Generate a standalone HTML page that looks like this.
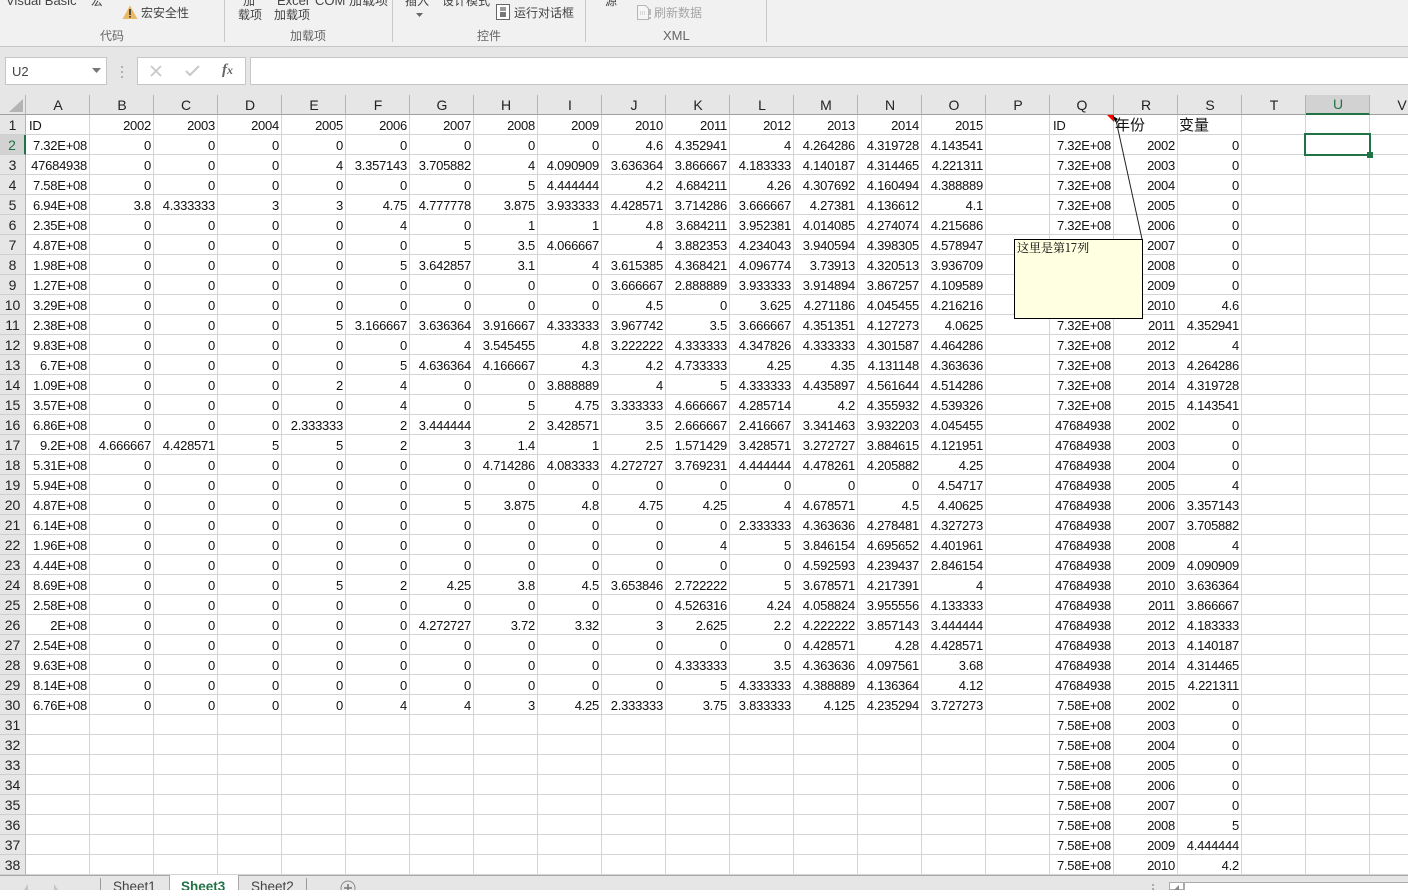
<!DOCTYPE html>
<html lang="zh"><head><meta charset="utf-8"><title>Sheet3</title>
<style>
html,body{margin:0;padding:0;width:1408px;height:890px;overflow:hidden;background:#e6e6e6}
body{position:relative;font-family:"Liberation Sans","Noto Sans CJK SC",sans-serif;color:#000}
.a{position:absolute;white-space:nowrap}
.r{font-size:12px;line-height:16px;color:#444}
.g{font-size:12px;line-height:16px;color:#666}
.sep{position:absolute;top:0;width:1px;height:42px;background:#c8c8c8}
#rib{position:absolute;left:0;top:0;width:1408px;height:46px;background:#f1f1f1;border-bottom:1px solid #c6c6c6}
.box{position:absolute;top:57px;height:26px;background:#fff;border:1px solid #c6c6c6}
#grid{position:absolute;left:0;top:95px;width:1408px;height:780px;overflow:hidden;background:#fff}
table{border-collapse:separate;border-spacing:0;table-layout:fixed;width:1434px;font-size:13px}
col{width:64px}col.h{width:26px}
tr{height:20px}
td{box-sizing:border-box;height:20px;padding:2px 2px 0 0;border-right:1px solid #d4d4d4;border-bottom:1px solid #d4d4d4;text-align:right;white-space:nowrap;overflow:hidden;line-height:17px;color:#111;letter-spacing:-.25px}
th{box-sizing:border-box;height:20px;padding:2px 0 0;font-weight:normal;background:#e6e6e6;text-align:center;font-size:14px;line-height:17px;color:#222;border-right:1px solid #b4b4b4;border-bottom:1px solid #cfcfcf}
thead th{border-bottom:1px solid #9f9f9f;padding:1px 0 0 1px;line-height:18px}
td.l{text-align:left;padding-left:3px}
td.c{text-align:left;padding-left:1px;font-size:15px;letter-spacing:0}
</style></head><body>
<div id="rib"></div>
<div class="a r" style="left:6px;top:-7px;font-size:13px">Visual Basic</div>
<div class="a r" style="left:91px;top:-7px">宏</div>
<svg class="a" style="left:122px;top:5px" width="16" height="15" viewBox="0 0 16 15"><path d="M8 .5L15.500 14H.5z" fill="#e9b968"/><path d="M7.200 4h1.600v6H7.200zM7.200 11h1.600v1.600H7.200z" fill="#333"/></svg>
<div class="a r" style="left:141px;top:5px">宏安全性</div>
<div class="a g" style="left:100px;top:28px">代码</div>
<div class="sep" style="left:224px"></div>
<div class="a r" style="left:243px;top:-7px">加</div>
<div class="a r" style="left:238px;top:7px">载项</div>
<div class="a r" style="left:277px;top:-7px;font-size:13px">Excel</div>
<div class="a r" style="left:315px;top:-7px;font-size:13px">COM 加载项</div>
<div class="a r" style="left:274px;top:7px">加载项</div>
<div class="a g" style="left:290px;top:28px">加载项</div>
<div class="sep" style="left:392px"></div>
<div class="a r" style="left:405px;top:-7px">插入</div>
<div class="a r" style="left:442px;top:-7px">设计模式</div>
<svg class="a" style="left:416px;top:13px" width="7" height="4"><path d="M0 0h7L3.500 4z" fill="#666"/></svg>
<svg class="a" style="left:496px;top:4px" width="14" height="16" viewBox="0 0 14 16"><rect x=".5" y=".5" width="13" height="15" fill="#fff" stroke="#666"/><rect x="4" y="3" width="6" height="4" fill="#999"/><rect x="4" y="8" width="6" height="5" fill="#777"/></svg>
<div class="a r" style="left:514px;top:5px">运行对话框</div>
<div class="a g" style="left:477px;top:28px">控件</div>
<div class="sep" style="left:585px"></div>
<div class="a r" style="left:605px;top:-7px">源</div>
<svg class="a" style="left:637px;top:5px" width="15" height="15" viewBox="0 0 15 15"><path d="M.5.5h8l3 3v11H.5z" fill="#f6f6f6" stroke="#b5b5b5"/><path d="M3 7h6M3 9h6" stroke="#b5b5b5" stroke-dasharray="1 1"/><path d="M13 4v6M13 12v2" stroke="#b0b0b0" stroke-width="1.600"/></svg>
<div class="a r" style="left:654px;top:5px;color:#a6a6a6">刷新数据</div>
<div class="a g" style="left:663px;top:28px;font-size:13px">XML</div>
<div class="sep" style="left:766px"></div>

<div class="box" style="left:5px;width:100px"></div>
<div class="a" style="left:12px;top:64px;font-size:13px;line-height:16px;color:#444">U2</div>
<svg class="a" style="left:92px;top:68px" width="9" height="5"><path d="M0 0h9L4.500 5z" fill="#777"/></svg>
<svg class="a" style="left:120px;top:66px" width="4" height="12"><path d="M1 0h2v2H1zM1 5h2v2H1zM1 10h2v2H1z" fill="#b0b0b0"/></svg>
<div class="box" style="left:137px;width:107px"></div>
<svg class="a" style="left:150px;top:65px" width="12" height="12"><path d="M1 1l10 10M11 1L1 11" stroke="#c8c8c8" stroke-width="1.800" fill="none"/></svg>
<svg class="a" style="left:185px;top:65px" width="15" height="12"><path d="M1 6l4 4 9-9" stroke="#c8c8c8" stroke-width="2" fill="none"/></svg>
<div class="a" style="left:222px;top:62px;font:italic bold 15px/17px 'Liberation Serif',serif;color:#666">f<span style="font-size:12px">x</span></div>
<div class="box" style="left:250px;width:1160px"></div>

<div id="grid"><table>
<colgroup><col class="h"><col span="22"></colgroup>
<thead><tr><th></th><th>A</th><th>B</th><th>C</th><th>D</th><th>E</th><th>F</th><th>G</th><th>H</th><th>I</th><th>J</th><th>K</th><th>L</th><th>M</th><th>N</th><th>O</th><th>P</th><th>Q</th><th>R</th><th>S</th><th>T</th><th style="background:#d2d2d2;color:#217346;border-bottom:2px solid #217346;line-height:17px">U</th><th>V</th></tr></thead>
<tbody>
<tr><th>1</th><td class="l">ID</td><td>2002</td><td>2003</td><td>2004</td><td>2005</td><td>2006</td><td>2007</td><td>2008</td><td>2009</td><td>2010</td><td>2011</td><td>2012</td><td>2013</td><td>2014</td><td>2015</td><td></td><td class="l">ID</td><td class="c">年份</td><td class="c">变量</td><td></td><td></td><td></td></tr>
<tr><th style="background:#d2d2d2;color:#217346;border-right:2px solid #217346">2</th><td>7.32E+08</td><td>0</td><td>0</td><td>0</td><td>0</td><td>0</td><td>0</td><td>0</td><td>0</td><td>4.6</td><td>4.352941</td><td>4</td><td>4.264286</td><td>4.319728</td><td>4.143541</td><td></td><td>7.32E+08</td><td>2002</td><td>0</td><td></td><td></td><td></td></tr>
<tr><th>3</th><td>47684938</td><td>0</td><td>0</td><td>0</td><td>4</td><td>3.357143</td><td>3.705882</td><td>4</td><td>4.090909</td><td>3.636364</td><td>3.866667</td><td>4.183333</td><td>4.140187</td><td>4.314465</td><td>4.221311</td><td></td><td>7.32E+08</td><td>2003</td><td>0</td><td></td><td></td><td></td></tr>
<tr><th>4</th><td>7.58E+08</td><td>0</td><td>0</td><td>0</td><td>0</td><td>0</td><td>0</td><td>5</td><td>4.444444</td><td>4.2</td><td>4.684211</td><td>4.26</td><td>4.307692</td><td>4.160494</td><td>4.388889</td><td></td><td>7.32E+08</td><td>2004</td><td>0</td><td></td><td></td><td></td></tr>
<tr><th>5</th><td>6.94E+08</td><td>3.8</td><td>4.333333</td><td>3</td><td>3</td><td>4.75</td><td>4.777778</td><td>3.875</td><td>3.933333</td><td>4.428571</td><td>3.714286</td><td>3.666667</td><td>4.27381</td><td>4.136612</td><td>4.1</td><td></td><td>7.32E+08</td><td>2005</td><td>0</td><td></td><td></td><td></td></tr>
<tr><th>6</th><td>2.35E+08</td><td>0</td><td>0</td><td>0</td><td>0</td><td>4</td><td>0</td><td>1</td><td>1</td><td>4.8</td><td>3.684211</td><td>3.952381</td><td>4.014085</td><td>4.274074</td><td>4.215686</td><td></td><td>7.32E+08</td><td>2006</td><td>0</td><td></td><td></td><td></td></tr>
<tr><th>7</th><td>4.87E+08</td><td>0</td><td>0</td><td>0</td><td>0</td><td>0</td><td>5</td><td>3.5</td><td>4.066667</td><td>4</td><td>3.882353</td><td>4.234043</td><td>3.940594</td><td>4.398305</td><td>4.578947</td><td></td><td></td><td>2007</td><td>0</td><td></td><td></td><td></td></tr>
<tr><th>8</th><td>1.98E+08</td><td>0</td><td>0</td><td>0</td><td>0</td><td>5</td><td>3.642857</td><td>3.1</td><td>4</td><td>3.615385</td><td>4.368421</td><td>4.096774</td><td>3.73913</td><td>4.320513</td><td>3.936709</td><td></td><td></td><td>2008</td><td>0</td><td></td><td></td><td></td></tr>
<tr><th>9</th><td>1.27E+08</td><td>0</td><td>0</td><td>0</td><td>0</td><td>0</td><td>0</td><td>0</td><td>0</td><td>3.666667</td><td>2.888889</td><td>3.933333</td><td>3.914894</td><td>3.867257</td><td>4.109589</td><td></td><td></td><td>2009</td><td>0</td><td></td><td></td><td></td></tr>
<tr><th>10</th><td>3.29E+08</td><td>0</td><td>0</td><td>0</td><td>0</td><td>0</td><td>0</td><td>0</td><td>0</td><td>4.5</td><td>0</td><td>3.625</td><td>4.271186</td><td>4.045455</td><td>4.216216</td><td></td><td></td><td>2010</td><td>4.6</td><td></td><td></td><td></td></tr>
<tr><th>11</th><td>2.38E+08</td><td>0</td><td>0</td><td>0</td><td>5</td><td>3.166667</td><td>3.636364</td><td>3.916667</td><td>4.333333</td><td>3.967742</td><td>3.5</td><td>3.666667</td><td>4.351351</td><td>4.127273</td><td>4.0625</td><td></td><td>7.32E+08</td><td>2011</td><td>4.352941</td><td></td><td></td><td></td></tr>
<tr><th>12</th><td>9.83E+08</td><td>0</td><td>0</td><td>0</td><td>0</td><td>0</td><td>4</td><td>3.545455</td><td>4.8</td><td>3.222222</td><td>4.333333</td><td>4.347826</td><td>4.333333</td><td>4.301587</td><td>4.464286</td><td></td><td>7.32E+08</td><td>2012</td><td>4</td><td></td><td></td><td></td></tr>
<tr><th>13</th><td>6.7E+08</td><td>0</td><td>0</td><td>0</td><td>0</td><td>5</td><td>4.636364</td><td>4.166667</td><td>4.3</td><td>4.2</td><td>4.733333</td><td>4.25</td><td>4.35</td><td>4.131148</td><td>4.363636</td><td></td><td>7.32E+08</td><td>2013</td><td>4.264286</td><td></td><td></td><td></td></tr>
<tr><th>14</th><td>1.09E+08</td><td>0</td><td>0</td><td>0</td><td>2</td><td>4</td><td>0</td><td>0</td><td>3.888889</td><td>4</td><td>5</td><td>4.333333</td><td>4.435897</td><td>4.561644</td><td>4.514286</td><td></td><td>7.32E+08</td><td>2014</td><td>4.319728</td><td></td><td></td><td></td></tr>
<tr><th>15</th><td>3.57E+08</td><td>0</td><td>0</td><td>0</td><td>0</td><td>4</td><td>0</td><td>5</td><td>4.75</td><td>3.333333</td><td>4.666667</td><td>4.285714</td><td>4.2</td><td>4.355932</td><td>4.539326</td><td></td><td>7.32E+08</td><td>2015</td><td>4.143541</td><td></td><td></td><td></td></tr>
<tr><th>16</th><td>6.86E+08</td><td>0</td><td>0</td><td>0</td><td>2.333333</td><td>2</td><td>3.444444</td><td>2</td><td>3.428571</td><td>3.5</td><td>2.666667</td><td>2.416667</td><td>3.341463</td><td>3.932203</td><td>4.045455</td><td></td><td>47684938</td><td>2002</td><td>0</td><td></td><td></td><td></td></tr>
<tr><th>17</th><td>9.2E+08</td><td>4.666667</td><td>4.428571</td><td>5</td><td>5</td><td>2</td><td>3</td><td>1.4</td><td>1</td><td>2.5</td><td>1.571429</td><td>3.428571</td><td>3.272727</td><td>3.884615</td><td>4.121951</td><td></td><td>47684938</td><td>2003</td><td>0</td><td></td><td></td><td></td></tr>
<tr><th>18</th><td>5.31E+08</td><td>0</td><td>0</td><td>0</td><td>0</td><td>0</td><td>0</td><td>4.714286</td><td>4.083333</td><td>4.272727</td><td>3.769231</td><td>4.444444</td><td>4.478261</td><td>4.205882</td><td>4.25</td><td></td><td>47684938</td><td>2004</td><td>0</td><td></td><td></td><td></td></tr>
<tr><th>19</th><td>5.94E+08</td><td>0</td><td>0</td><td>0</td><td>0</td><td>0</td><td>0</td><td>0</td><td>0</td><td>0</td><td>0</td><td>0</td><td>0</td><td>0</td><td>4.54717</td><td></td><td>47684938</td><td>2005</td><td>4</td><td></td><td></td><td></td></tr>
<tr><th>20</th><td>4.87E+08</td><td>0</td><td>0</td><td>0</td><td>0</td><td>0</td><td>5</td><td>3.875</td><td>4.8</td><td>4.75</td><td>4.25</td><td>4</td><td>4.678571</td><td>4.5</td><td>4.40625</td><td></td><td>47684938</td><td>2006</td><td>3.357143</td><td></td><td></td><td></td></tr>
<tr><th>21</th><td>6.14E+08</td><td>0</td><td>0</td><td>0</td><td>0</td><td>0</td><td>0</td><td>0</td><td>0</td><td>0</td><td>0</td><td>2.333333</td><td>4.363636</td><td>4.278481</td><td>4.327273</td><td></td><td>47684938</td><td>2007</td><td>3.705882</td><td></td><td></td><td></td></tr>
<tr><th>22</th><td>1.96E+08</td><td>0</td><td>0</td><td>0</td><td>0</td><td>0</td><td>0</td><td>0</td><td>0</td><td>0</td><td>4</td><td>5</td><td>3.846154</td><td>4.695652</td><td>4.401961</td><td></td><td>47684938</td><td>2008</td><td>4</td><td></td><td></td><td></td></tr>
<tr><th>23</th><td>4.44E+08</td><td>0</td><td>0</td><td>0</td><td>0</td><td>0</td><td>0</td><td>0</td><td>0</td><td>0</td><td>0</td><td>0</td><td>4.592593</td><td>4.239437</td><td>2.846154</td><td></td><td>47684938</td><td>2009</td><td>4.090909</td><td></td><td></td><td></td></tr>
<tr><th>24</th><td>8.69E+08</td><td>0</td><td>0</td><td>0</td><td>5</td><td>2</td><td>4.25</td><td>3.8</td><td>4.5</td><td>3.653846</td><td>2.722222</td><td>5</td><td>3.678571</td><td>4.217391</td><td>4</td><td></td><td>47684938</td><td>2010</td><td>3.636364</td><td></td><td></td><td></td></tr>
<tr><th>25</th><td>2.58E+08</td><td>0</td><td>0</td><td>0</td><td>0</td><td>0</td><td>0</td><td>0</td><td>0</td><td>0</td><td>4.526316</td><td>4.24</td><td>4.058824</td><td>3.955556</td><td>4.133333</td><td></td><td>47684938</td><td>2011</td><td>3.866667</td><td></td><td></td><td></td></tr>
<tr><th>26</th><td>2E+08</td><td>0</td><td>0</td><td>0</td><td>0</td><td>0</td><td>4.272727</td><td>3.72</td><td>3.32</td><td>3</td><td>2.625</td><td>2.2</td><td>4.222222</td><td>3.857143</td><td>3.444444</td><td></td><td>47684938</td><td>2012</td><td>4.183333</td><td></td><td></td><td></td></tr>
<tr><th>27</th><td>2.54E+08</td><td>0</td><td>0</td><td>0</td><td>0</td><td>0</td><td>0</td><td>0</td><td>0</td><td>0</td><td>0</td><td>0</td><td>4.428571</td><td>4.28</td><td>4.428571</td><td></td><td>47684938</td><td>2013</td><td>4.140187</td><td></td><td></td><td></td></tr>
<tr><th>28</th><td>9.63E+08</td><td>0</td><td>0</td><td>0</td><td>0</td><td>0</td><td>0</td><td>0</td><td>0</td><td>0</td><td>4.333333</td><td>3.5</td><td>4.363636</td><td>4.097561</td><td>3.68</td><td></td><td>47684938</td><td>2014</td><td>4.314465</td><td></td><td></td><td></td></tr>
<tr><th>29</th><td>8.14E+08</td><td>0</td><td>0</td><td>0</td><td>0</td><td>0</td><td>0</td><td>0</td><td>0</td><td>0</td><td>5</td><td>4.333333</td><td>4.388889</td><td>4.136364</td><td>4.12</td><td></td><td>47684938</td><td>2015</td><td>4.221311</td><td></td><td></td><td></td></tr>
<tr><th>30</th><td>6.76E+08</td><td>0</td><td>0</td><td>0</td><td>0</td><td>4</td><td>4</td><td>3</td><td>4.25</td><td>2.333333</td><td>3.75</td><td>3.833333</td><td>4.125</td><td>4.235294</td><td>3.727273</td><td></td><td>7.58E+08</td><td>2002</td><td>0</td><td></td><td></td><td></td></tr>
<tr><th>31</th><td></td><td></td><td></td><td></td><td></td><td></td><td></td><td></td><td></td><td></td><td></td><td></td><td></td><td></td><td></td><td></td><td>7.58E+08</td><td>2003</td><td>0</td><td></td><td></td><td></td></tr>
<tr><th>32</th><td></td><td></td><td></td><td></td><td></td><td></td><td></td><td></td><td></td><td></td><td></td><td></td><td></td><td></td><td></td><td></td><td>7.58E+08</td><td>2004</td><td>0</td><td></td><td></td><td></td></tr>
<tr><th>33</th><td></td><td></td><td></td><td></td><td></td><td></td><td></td><td></td><td></td><td></td><td></td><td></td><td></td><td></td><td></td><td></td><td>7.58E+08</td><td>2005</td><td>0</td><td></td><td></td><td></td></tr>
<tr><th>34</th><td></td><td></td><td></td><td></td><td></td><td></td><td></td><td></td><td></td><td></td><td></td><td></td><td></td><td></td><td></td><td></td><td>7.58E+08</td><td>2006</td><td>0</td><td></td><td></td><td></td></tr>
<tr><th>35</th><td></td><td></td><td></td><td></td><td></td><td></td><td></td><td></td><td></td><td></td><td></td><td></td><td></td><td></td><td></td><td></td><td>7.58E+08</td><td>2007</td><td>0</td><td></td><td></td><td></td></tr>
<tr><th>36</th><td></td><td></td><td></td><td></td><td></td><td></td><td></td><td></td><td></td><td></td><td></td><td></td><td></td><td></td><td></td><td></td><td>7.58E+08</td><td>2008</td><td>5</td><td></td><td></td><td></td></tr>
<tr><th>37</th><td></td><td></td><td></td><td></td><td></td><td></td><td></td><td></td><td></td><td></td><td></td><td></td><td></td><td></td><td></td><td></td><td>7.58E+08</td><td>2009</td><td>4.444444</td><td></td><td></td><td></td></tr>
<tr><th>38</th><td></td><td></td><td></td><td></td><td></td><td></td><td></td><td></td><td></td><td></td><td></td><td></td><td></td><td></td><td></td><td></td><td>7.58E+08</td><td>2010</td><td>4.2</td><td></td><td></td><td></td></tr>
</tbody></table></div>

<svg class="a" style="left:8px;top:98px" width="16" height="15"><path d="M15 1V14H1z" fill="#b4b4b4"/></svg>
<div class="a" style="left:1304px;top:133px;width:63px;height:19px;border:2px solid #217346"></div>
<div class="a" style="left:1367px;top:152px;width:6px;height:6px;background:#217346"></div>

<svg class="a" style="left:1100px;top:112px" width="50" height="130"><path d="M7 3h7v7z" fill="#f00"/><path d="M15.500 6L42 127" stroke="#222" stroke-width="1" fill="none"/><path d="M13 4l5 3-3 3z" fill="#000"/></svg>
<div class="a" style="left:1014px;top:239px;width:127px;height:78px;background:#ffffe1;border:1px solid #000"></div>
<div class="a" style="left:1017px;top:240px;font:12px/16px 'Noto Serif CJK SC','Liberation Serif',serif;color:#000">这里是第17列</div>

<div class="a" style="left:0;top:875px;width:1408px;height:15px;background:#e6e6e6;border-top:1px solid #a8a8a8;box-sizing:border-box"></div>
<svg class="a" style="left:24px;top:884px" width="40" height="6"><path d="M4 0v6L0 6zM30 0l4 6h-4z" fill="#c4c4c4"/></svg>
<div class="a" style="left:100px;top:878px;width:1px;height:12px;background:#9a9a9a"></div>
<div class="a" style="left:113px;top:879px;font-size:13.500px;line-height:16px;color:#444">Sheet1</div>
<div class="a" style="left:169px;top:875px;width:68px;height:15px;background:#fff;border-left:1px solid #a8a8a8;border-right:1px solid #a8a8a8"></div>
<div class="a" style="left:181px;top:879px;font-size:13.500px;line-height:16px;font-weight:bold;color:#217346">Sheet3</div>
<div class="a" style="left:251px;top:879px;font-size:13.500px;line-height:16px;color:#444">Sheet2</div>
<div class="a" style="left:306px;top:878px;width:1px;height:12px;background:#9a9a9a"></div>
<svg class="a" style="left:340px;top:880px" width="16" height="10"><circle cx="8" cy="8" r="7" fill="none" stroke="#8a8a8a"/><path d="M8 4v8M4 8h8" stroke="#777" stroke-width="1.500"/></svg>
<svg class="a" style="left:1151px;top:884px" width="4" height="6"><path d="M1 0h2v2H1zM1 4h2v2H1z" fill="#aaa"/></svg>
<div class="a" style="left:1169px;top:882px;width:15px;height:8px;background:#fff;border:1px solid #ababab;box-sizing:border-box"></div>
<svg class="a" style="left:1173px;top:885px" width="7" height="5"><path d="M6 0v5H1z" fill="#888"/></svg>
<div class="a" style="left:1184px;top:882px;width:224px;height:8px;background:#fff;border-top:1px solid #ababab;border-left:1px solid #ababab;box-sizing:border-box"></div>
</body></html>
